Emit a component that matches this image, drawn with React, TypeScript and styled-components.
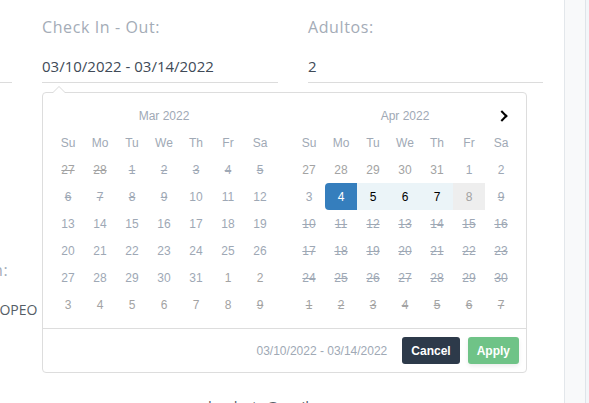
import styled, { createGlobalStyle } from 'styled-components';

type DayState = 'start' | 'range' | 'hover' | undefined;

interface Day {
    d: number;
    off?: boolean;
    disabled?: boolean;
    state?: DayState;
}

const GlobalStyle = createGlobalStyle`
    html, body {
        margin: 0;
        padding: 0;
        background: #ffffff;
        overflow: hidden;
    }
    body {
        font-family: 'Open Sans', 'Liberation Sans', sans-serif;
    }
`;

const dayNames = ['Su', 'Mo', 'Tu', 'We', 'Th', 'Fr', 'Sa'];

const build = (nums: number[], opts: (n: number, i: number) => Partial<Day>): Day[] =>
    nums.map((d, i) => ({ d, ...opts(d, i) }));

const marDays: Day[] = build(
    [27, 28, 1, 2, 3, 4, 5, 6, 7, 8, 9, 10, 11, 12, 13, 14, 15, 16, 17, 18, 19, 20, 21, 22, 23, 24, 25, 26, 27, 28, 29, 30, 31, 1, 2, 3, 4, 5, 6, 7, 8, 9],
    (_d, i) => ({
        off: i < 2 || i >= 33,
        disabled: i < 11 || i === 41,
    }),
);

const aprDays: Day[] = build(
    [27, 28, 29, 30, 31, 1, 2, 3, 4, 5, 6, 7, 8, 9, 10, 11, 12, 13, 14, 15, 16, 17, 18, 19, 20, 21, 22, 23, 24, 25, 26, 27, 28, 29, 30, 1, 2, 3, 4, 5, 6, 7],
    (_d, i) => ({
        off: i < 5 || i >= 35,
        disabled: i >= 13,
        state: i === 8 ? 'start' : i >= 9 && i <= 11 ? 'range' : i === 12 ? 'hover' : undefined,
    }),
);

const Calendar = ({ title, days, next }: { title: string; days: Day[]; next?: boolean }) => (
    <CalGrid>
        <HeadCell />
        <MonthCell>{title}</MonthCell>
        <HeadCell>{next && <NextArrow />}</HeadCell>
        {dayNames.map((n) => (
            <DayName key={n}>{n}</DayName>
        ))}
        {days.map((day, i) => (
            <DayCell key={i} $off={day.off} $disabled={day.disabled} $state={day.state}>
                {day.d}
            </DayCell>
        ))}
    </CalGrid>
);

const App = () => {
    return (
        <>
            <GlobalStyle />
            <Page>
                <Main>
                    <FieldRow>
                        <Field>
                            <Label>Habitación:</Label>
                            <Value>Doble</Value>
                        </Field>
                        <Field>
                            <Label>Check In - Out:</Label>
                            <Value>03/10/2022 - 03/14/2022</Value>
                        </Field>
                        <Field>
                            <Label>Adultos:</Label>
                            <Value>2</Value>
                        </Field>
                    </FieldRow>

                    <SecondRow>
                        <PlanField>
                            <Label>Régimen:</Label>
                            <PlanValue>PLAN EUROPEO</PlanValue>
                        </PlanField>
                    </SecondRow>

                    <Email>pruebaalerta@mail.com</Email>

                    <Picker>
                        <Calendars>
                            <Calendar title="Mar 2022" days={marDays} />
                            <Calendar title="Apr 2022" days={aprDays} next />
                        </Calendars>
                        <Footer>
                            <SelectedRange>03/10/2022 - 03/14/2022</SelectedRange>
                            <Button $kind="cancel" type="button">
                                Cancel
                            </Button>
                            <Button $kind="apply" type="button">
                                Apply
                            </Button>
                        </Footer>
                    </Picker>
                </Main>
                <SideStrip />
                <Rest />
            </Page>
        </>
    );
};

export default App;

const Page = styled.div`
    display: flex;
    height: 403px;
`;

const Main = styled.div`
    position: relative;
    width: 564px;
    flex-shrink: 0;
    border-right: 1px solid #e3e7eb;
    overflow: hidden;
`;

const SideStrip = styled.div`
    width: 20px;
    flex-shrink: 0;
    background: #f8f9fa;
    border-right: 1px solid #dfe4e9;
`;

const Rest = styled.div`
    flex: 1;
    background: #f3f6f9;
`;

const FieldRow = styled.div`
    display: grid;
    grid-template-columns: 236px 236px 235px;
    column-gap: 30px;
    margin-left: -224px;
    padding-top: 15px;
`;

const Field = styled.div`
    display: flex;
    flex-direction: column;
`;

const Label = styled.div`
    font-size: 16px;
    line-height: 24px;
    letter-spacing: 0.6px;
    color: #a4acb7;
    white-space: nowrap;
`;

const Value = styled.div`
    padding: 16px 0 5px;
    font-size: 15px;
    line-height: 22px;
    color: #404a57;
    border-bottom: 1px solid #dcdcdc;
    white-space: nowrap;
`;

const SecondRow = styled.div`
    display: flex;
    margin-top: 175px;
`;

const PlanField = styled.div`
    display: flex;
    flex-direction: column;
    margin-left: -66px;
`;

const PlanValue = styled.div`
    padding-top: 19px;
    font-size: 14px;
    line-height: 18px;
    color: #555d66;
    white-space: nowrap;
`;

const Email = styled.div`
    padding: 76px 0 0 175px;
    font-size: 15px;
    line-height: 22px;
    color: #555d66;
`;

const Picker = styled.div`
    position: absolute;
    top: 92px;
    left: 42px;
    width: 485px;
    height: 281px;
    box-sizing: border-box;
    background: #ffffff;
    border: 1px solid #dddddd;
    border-radius: 4px;
    font-family: 'Liberation Sans', Arial, sans-serif;
    font-size: 12px;

    &::before {
        content: '';
        position: absolute;
        top: -7px;
        left: 9px;
        border-left: 7px solid transparent;
        border-right: 7px solid transparent;
        border-bottom: 7px solid #d9d9d9;
    }

    &::after {
        content: '';
        position: absolute;
        top: -6px;
        left: 10px;
        border-left: 6px solid transparent;
        border-right: 6px solid transparent;
        border-bottom: 6px solid #ffffff;
    }
`;

const Calendars = styled.div`
    display: flex;
    justify-content: space-between;
    padding: 9px 9px 10px 9px;
`;

const CalGrid = styled.div`
    display: grid;
    grid-template-columns: repeat(7, 32px);
    grid-auto-rows: 27px;
`;

const HeadCell = styled.div`
    display: flex;
    align-items: center;
    justify-content: center;
`;

const MonthCell = styled.div`
    grid-column: span 5;
    display: flex;
    align-items: center;
    justify-content: center;
    color: #a0a9b5;
`;

const NextArrow = styled.span`
    display: inline-block;
    border: solid #000000;
    border-width: 0 2px 2px 0;
    padding: 3px;
    margin-left: 1px;
    transform: rotate(-45deg);
`;

const DayName = styled.div`
    display: flex;
    align-items: center;
    justify-content: center;
    color: #a0a9b5;
`;

const DayCell = styled.div<{ $off?: boolean; $disabled?: boolean; $state?: DayState }>`
    display: flex;
    align-items: center;
    justify-content: center;
    color: ${(p) => (p.$off ? '#a3a3a3' : '#9ea8b5')};
    text-decoration: ${(p) => (p.$disabled ? 'line-through' : 'none')};

    ${(p) =>
        p.$state === 'start' &&
        `
        background: #357ebd;
        color: #ffffff;
        border-radius: 4px 0 0 4px;
    `}

    ${(p) =>
        p.$state === 'range' &&
        `
        background: #ebf4f8;
        color: #000000;
    `}

    ${(p) =>
        p.$state === 'hover' &&
        `
        background: #eeeeee;
        color: #a3a3a3;
    `}
`;

const Footer = styled.div`
    display: flex;
    align-items: center;
    justify-content: flex-end;
    gap: 8px;
    height: 44px;
    padding: 0 7px 0 8px;
    border-top: 1px solid #dddddd;
    box-sizing: border-box;
`;

const SelectedRange = styled.span`
    margin-right: 7px;
    color: #a0a9b5;
    font-size: 12px;
`;

const Button = styled.button<{ $kind: 'cancel' | 'apply' }>`
    height: 27px;
    padding: 0 9px;
    border: none;
    border-radius: 3px;
    font-family: 'Liberation Sans', Arial, sans-serif;
    font-size: 12px;
    font-weight: bold;
    color: #ffffff;
    background: ${(p) => (p.$kind === 'cancel' ? '#2d3a4a' : '#6fc387')};
    box-shadow: ${(p) => (p.$kind === 'apply' ? '0 2px 4px rgba(0, 0, 0, 0.08)' : 'none')};
    cursor: pointer;
`;
